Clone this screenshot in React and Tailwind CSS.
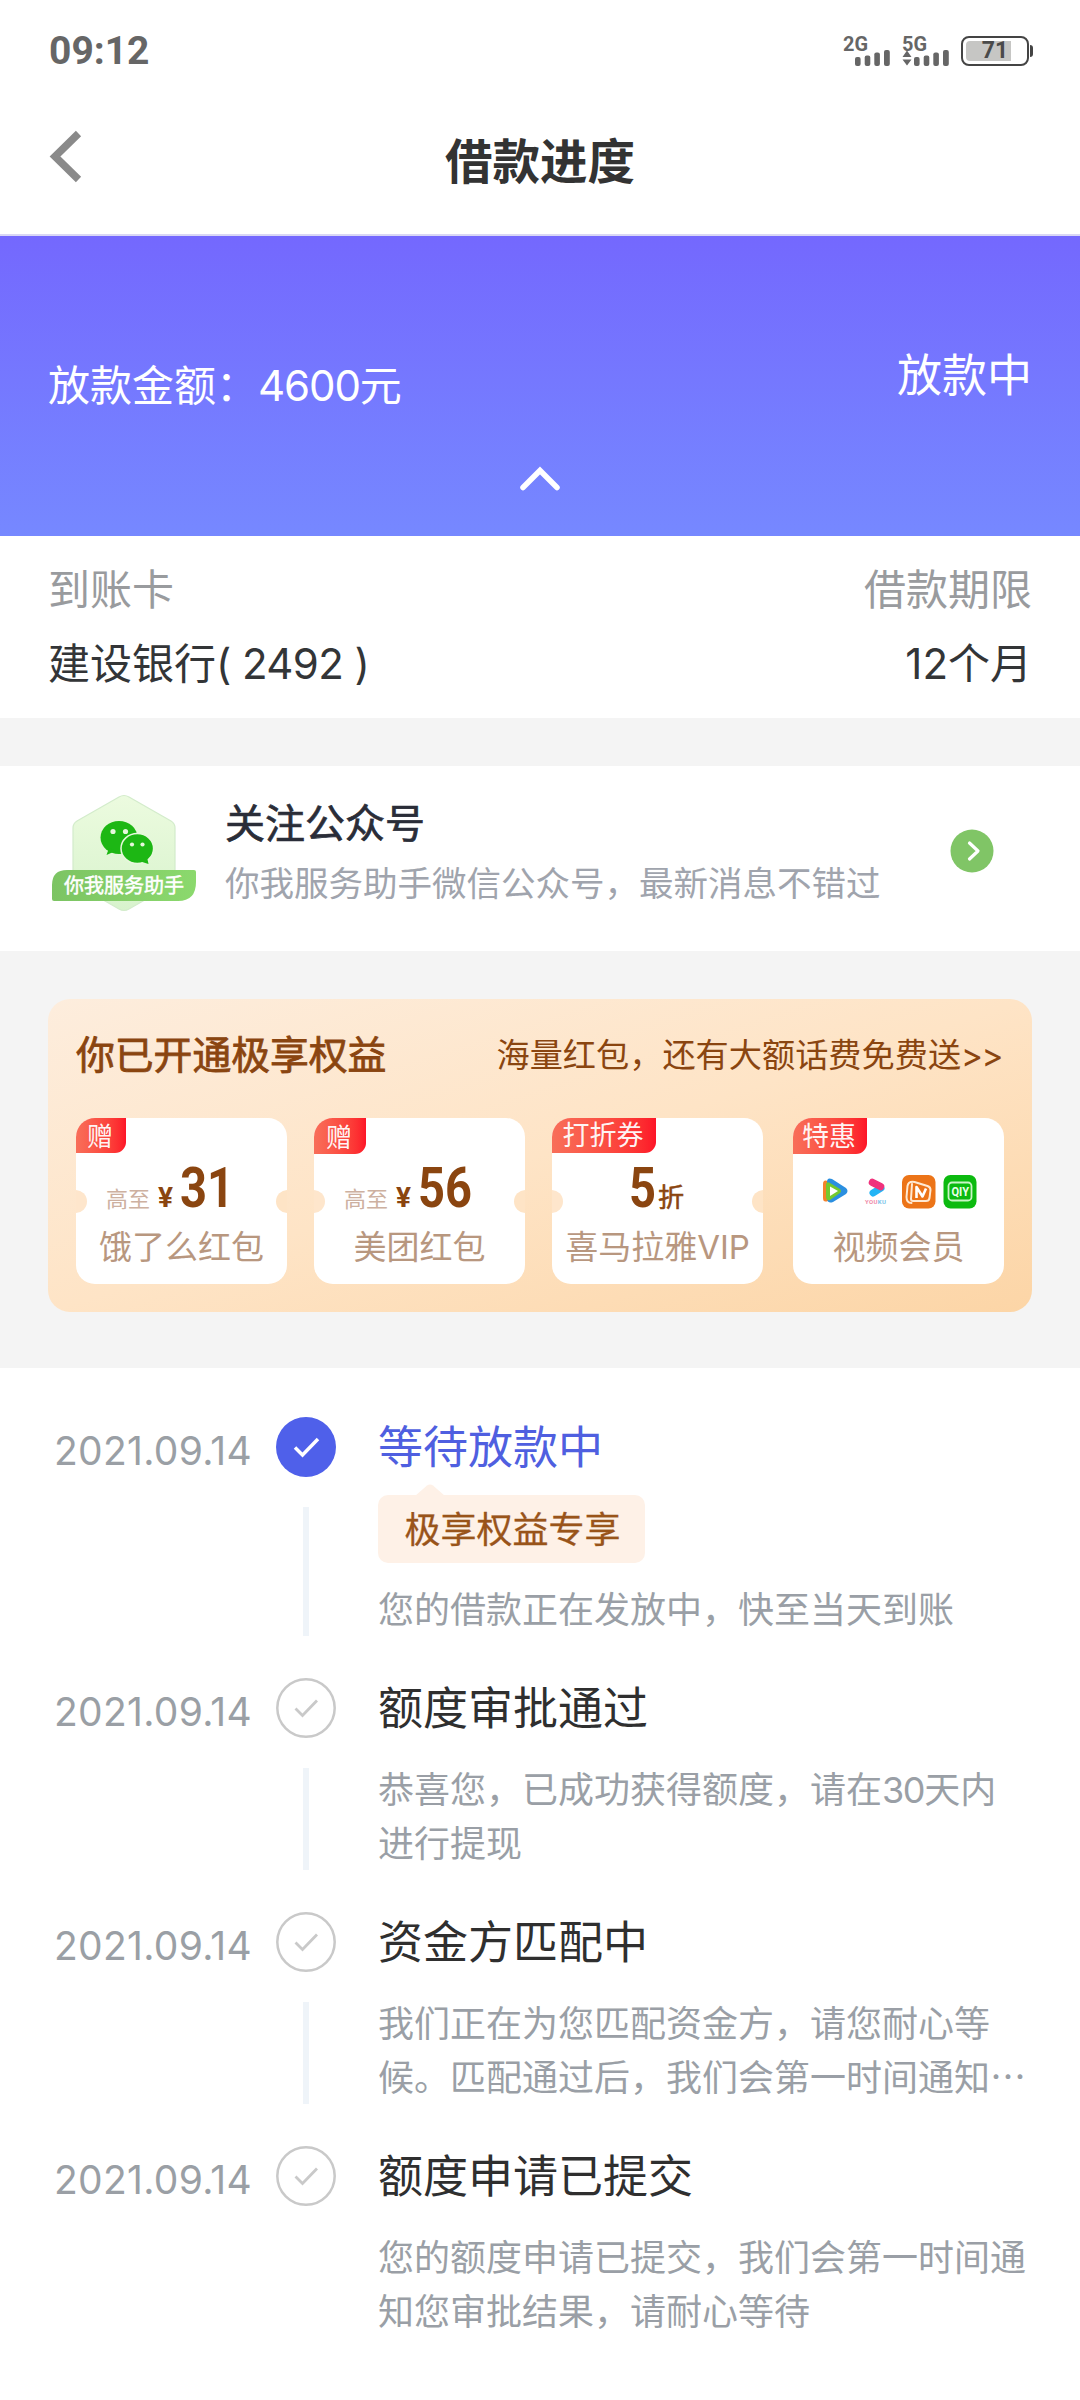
const coupons = [
  { tag: '赠', tagClass: 'w-[50px] h-[35px] text-[26px]', prefix: '高至', amount: '31', label: '饿了么红包', margin: '' },
  { tag: '赠', tagClass: 'w-[52px] h-[36px] text-[26px]', prefix: '高至', amount: '56', label: '美团红包', margin: 'ml-[27px]' },
  { tag: '打折券', tagClass: 'w-[104px] h-[35px] text-[27px]', discount: '5', label: '喜马拉雅VIP', margin: 'ml-[27px]' },
  { tag: '特惠', tagClass: 'w-[74px] h-[36px] text-[27px]', video: true, label: '视频会员', margin: 'ml-[30px]' },
];

const steps = [
  {
    date: '2021.09.14',
    title: '等待放款中',
    active: true,
    badge: '极享权益专享',
    lines: ['您的借款正在发放中，快至当天到账'],
  },
  {
    date: '2021.09.14',
    title: '额度审批通过',
    lines: [
      <>恭喜您，已成功获得额度，请在<span className="tracking-[-1.4px]">30</span>天内</>,
      '进行提现',
    ],
  },
  {
    date: '2021.09.14',
    title: '资金方匹配中',
    lines: ['我们正在为您匹配资金方，请您耐心等', '候。匹配通过后，我们会第一时间通知⋯'],
  },
  {
    date: '2021.09.14',
    title: '额度申请已提交',
    lines: ['您的额度申请已提交，我们会第一时间通', '知您审批结果，请耐心等待'],
  },
];

const SignalIcon = ({ label, arrows }) => (
  <svg width="50" height="44" viewBox="0 -6 50 44" fill="#666666">
    <text x="0" y="16" fontSize="21" fontWeight="700" fontFamily="Roboto, sans-serif" textLength="25" lengthAdjust="spacingAndGlyphs">{label}</text>
    {arrows && <path d="M5 15.500l4.500 6.500h-9zM5 30.500l-4.500-6h9z" />}
    <rect x="12" y="22" width="5.600" height="9" rx="2" />
    <rect x="21.700" y="20.500" width="5.600" height="10.500" rx="2" />
    <rect x="31.300" y="17.500" width="5.600" height="13.500" rx="2" />
    <rect x="41" y="15" width="5.800" height="16" rx="2" />
  </svg>
);

const StatusBar = () => (
  <div className="h-[102px] pl-[49px] pr-[47px] flex items-center justify-between">
    <span className="font-[Roboto] font-bold text-[39px] leading-[40px] text-[#666666]">09:12</span>
    <div className="flex items-center">
      <SignalIcon label="2G" />
      <div className="ml-[9px]">
        <SignalIcon label="5G" arrows />
      </div>
      <div className="ml-[9px] w-[68px] h-[30px] rounded-[8px] border-2 border-[#444444] p-[3px] relative">
        <div className="w-[45px] h-full rounded-l-[4px] bg-[#c6c6c4]"></div>
        <span className="absolute inset-0 flex items-center justify-center font-[Roboto] font-bold text-[23px] text-[#4a4a4a]">71</span>
      </div>
      <div className="ml-[1px] w-[3px] h-[12px] rounded-r-full bg-[#444444]"></div>
    </div>
  </div>
);

const NavBar = () => (
  <div className="h-[134px] border-b-2 border-[#d9d7f5] px-[48px] flex items-start">
    <svg className="mt-[28px]" width="36" height="54" viewBox="0 0 36 54" fill="none">
      <path d="M30.500 3.500L7 26.500l23.500 23" stroke="#8a8a8a" strokeWidth="7.500" />
    </svg>
    <h1 className="flex-1 mt-[30px] mr-[36px] text-center font-bold text-[47.5px] leading-[60px] text-[#333333]">借款进度</h1>
  </div>
);

const LoanHeader = () => (
  <div className="h-[300px] px-[48px] bg-linear-to-b from-[#7468fe] to-[#7688ff] text-white">
    <div className="h-[226px] pt-[110px] flex justify-between items-start">
      <div className="mt-[10px] text-[42px] leading-[60px]">
        放款金额：<span className="tracking-[-1.1px]">4600</span>元
      </div>
      <div className="text-[45px] leading-[60px]">放款中</div>
    </div>
    <svg className="mx-auto" width="44" height="32" viewBox="0 0 44 32" fill="none">
      <path d="M5 25.500L22 8.500l17 17" stroke="#ffffff" strokeWidth="5.500" strokeLinecap="round" />
    </svg>
  </div>
);

const LoanInfo = () => (
  <div className="h-[182px] px-[48px] pt-[24px] bg-white text-[42px] leading-[60px]">
    <div className="flex justify-between text-[#999b9e]">
      <span>到账卡</span>
      <span>借款期限</span>
    </div>
    <div className="mt-[14px] flex justify-between text-[#333537]">
      <span>建设银行<span className="tracking-[-0.6px]">( 2492 )</span></span>
      <span>12个月</span>
    </div>
  </div>
);

const AssistantIcon = () => (
  <svg width="146" height="120" viewBox="0 0 146 120">
    <defs>
      <linearGradient id="hex" x1="0" y1="0" x2="0" y2="1">
        <stop offset="0" stopColor="#ecfbdf" />
        <stop offset="1" stopColor="#d8f3cd" />
      </linearGradient>
      <linearGradient id="ribbon" x1="0" y1="0" x2="1" y2="0">
        <stop offset="0" stopColor="#7cc463" />
        <stop offset="1" stopColor="#8bd96d" />
      </linearGradient>
    </defs>
    <path d="M67 3q5-3 10 0l42 24q4 2.500 4 7v50q0 5-4 7l-42 24q-5 3-10 0l-42-24q-4-2-4-7v-50q0-4.500 4-7z" fill="url(#hex)" stroke="#d3eccb" strokeWidth="1.200" />
    <ellipse cx="67" cy="43.500" rx="18.500" ry="16.500" fill="#1db714" />
    <path d="M57 54l-2.500 7 9-4z" fill="#1db714" />
    <ellipse cx="85.300" cy="54.500" rx="16.300" ry="15" fill="#1db714" stroke="#e7f8dc" strokeWidth="1.500" />
    <path d="M87 67l9.500 3-1.500-7z" fill="#1db714" />
    <circle cx="61" cy="37.500" r="2.600" fill="#e7f8dc" />
    <circle cx="73.500" cy="37.500" r="2.600" fill="#e7f8dc" />
    <circle cx="80" cy="50.500" r="2.100" fill="#e7f8dc" />
    <circle cx="90.500" cy="50.500" r="2.100" fill="#e7f8dc" />
    <path d="M15 76H142q2 0 2 2v10q0 19-18 19H2q-2 0-2-2V91Q0 76 15 76z" fill="url(#ribbon)" />
    <text x="72" y="99" textAnchor="middle" fontSize="20" fill="#ffffff" stroke="#ffffff" strokeWidth="0.500" fontFamily="'Noto Sans CJK SC', sans-serif">你我服务助手</text>
  </svg>
);

const FollowCard = () => (
  <div className="h-[185px] pl-[52px] pr-[86px] bg-white flex items-start">
    <div className="mt-[28px]">
      <AssistantIcon />
    </div>
    <div className="ml-[27px] flex-1 whitespace-nowrap">
      <div className="mt-[33px] text-[40px] leading-[50px] text-[#2a2d38] [-webkit-text-stroke:0.7px_#2a2d38]">关注公众号</div>
      <div className="mt-[10px] text-[34.5px] leading-[50px] text-[#a0a4ad]">你我服务助手微信公众号，最新消息不错过</div>
    </div>
    <svg className="mt-[63px]" width="44" height="44" viewBox="0 0 44 44" fill="none">
      <circle cx="22" cy="22" r="21.500" fill="#80c566" />
      <path d="M19.500 14l8.500 8-8.500 8" stroke="#ffffff" strokeWidth="3.200" strokeLinecap="round" strokeLinejoin="round" />
    </svg>
  </div>
);

const VideoLogos = () => (
  <svg className="mx-auto" width="158" height="36" viewBox="0 0 158 36">
    {/* Tencent Video */}
    <path d="M8 8q-5-2-5 3v14q0 5 5 3z" fill="#f5822a" />
    <path d="M7 9q0-5 5-3l14 9q3 3 0 6l-13 8q-5 2-6-3z" fill="#2b8fe0" />
    <path d="M6 11q1-3 4-1l10 6q2 2 0 4l-10 7q-3 1-4-2z" fill="#74c92e" />
    <path d="M10 13.500l8 4.500-8 5z" fill="#ffffff" />
    {/* Youku */}
    <path d="M53 20l8-5" stroke="#22b4f5" strokeWidth="7" strokeLinecap="round" />
    <path d="M52.500 9.500l8 4" stroke="#f0327c" strokeWidth="7.500" strokeLinecap="round" />
    <text x="45" y="30.500" fontSize="6" fontWeight="700" fontFamily="Roboto, sans-serif" textLength="21" fill="#f08aa8">YOU<tspan fill="#7cc4ea">KU</tspan></text>
    {/* Mango TV */}
    <rect x="82" y="2" width="33.500" height="33.500" rx="7" fill="#ec7418" />
    <path d="M92 11l-1 15q0 2 2 2h13q3 0 3.500-3l1-8q0-3-3-4l-13-4q-6-1-7 4l-1 11q0 6 5 6" fill="none" stroke="#ffe9d2" strokeWidth="2" strokeLinecap="round" strokeLinejoin="round" />
    <path d="M96.500 25V14l6 9.500 3.500-8" fill="none" stroke="#ffffff" strokeWidth="2.600" strokeLinejoin="round" />
    {/* iQIYI */}
    <rect x="123.500" y="2" width="33" height="33.500" rx="7" fill="#0cba10" />
    <rect x="128.500" y="9.500" width="23" height="18" rx="3.500" fill="none" stroke="#c9f5c6" strokeWidth="1.800" />
    <text x="131.500" y="23" fontSize="12" fontWeight="700" fontFamily="Roboto, sans-serif" textLength="17.500" lengthAdjust="spacingAndGlyphs" fill="#eaffea">QIY</text>
  </svg>
);

const Coupon = ({ tag, tagClass, prefix, amount, discount, video, label, margin }) => (
  <div className={`relative w-[211px] h-[166px] rounded-[19px] bg-white overflow-hidden shrink-0 ${margin}`}>
    <div className={`absolute left-0 top-0 flex items-center justify-center rounded-br-[11px] bg-linear-to-r from-[#f86e59] to-[#fd1428] text-white/95 ${tagClass}`}>
      <span className="relative -left-px top-px">{tag}</span>
    </div>
    {!video && (
      <>
        <div className="absolute -left-[12px] top-[72px] size-[23px] rounded-full bg-[#fee6cc]"></div>
        <div className="absolute -right-[12px] top-[72px] size-[23px] rounded-full bg-[#fee4c6]"></div>
      </>
    )}
    <div className="h-[96px] pt-[40px] text-[#8a4510]">
      {amount && (
        <div className="pl-[30px] flex items-baseline leading-[60px]">
          <span className="w-[45px] text-[22px] whitespace-nowrap text-[#cdb0a0]">{prefix}</span>
          <span className="ml-[7px] w-[22px] font-[Roboto] font-bold text-[28px]">¥</span>
          <span className="inline-block origin-left scale-x-[0.84] font-[Roboto] font-bold text-[56px]">{amount}</span>
        </div>
      )}
      {discount && (
        <div className="pl-[77px] flex items-baseline leading-[60px]">
          <span className="inline-block w-[29px] origin-left scale-x-[0.84] font-[Roboto] font-bold text-[56px]">{discount}</span>
          <span className="text-[26px] [-webkit-text-stroke:0.6px_#8a4510]">折</span>
        </div>
      )}
      {video && (
        <div className="pt-[15px]">
          <VideoLogos />
        </div>
      )}
    </div>
    <div className="h-[66px] text-center whitespace-nowrap text-[33px] leading-[66px] text-[#b8977f]">{label}</div>
  </div>
);

const BenefitsCard = () => (
  <div className="h-[313px] rounded-[22px] px-[28px] pt-[31px] bg-linear-to-br from-[#fdeddd] via-[#fee4c6] to-[#fcd5a6]">
    <div className="flex items-center justify-between whitespace-nowrap leading-[50px] text-[#8a4510]">
      <span className="text-[38.8px] [-webkit-text-stroke:0.8px_#8a4510]">你已开通极享权益</span>
      <span className="mr-[2px] text-[33.2px]">海量红包，还有大额话费免费送<span className="tracking-[-1.5px]">&gt;&gt;</span></span>
    </div>
    <div className="mt-[38px] flex">
      {coupons.map((c, i) => (
        <Coupon key={i} {...c} />
      ))}
    </div>
  </div>
);

const Step = ({ date, title, active, badge, lines, last }) => (
  <div className="flex">
    <div className="w-[222px] pt-[4px] text-[39px] leading-[60px] tracking-[0.3px] text-[#9a9fa5]">{date}</div>
    <div className="w-[60px] flex flex-col items-center">
      {active ? (
        <svg width="60" height="60" viewBox="0 0 60 60" fill="none">
          <circle cx="30" cy="30" r="30" fill="#4f60ea" />
          <path d="M19 30.500l7.500 7.500L42 22" stroke="#ffffff" strokeWidth="3.500" />
        </svg>
      ) : (
        <svg width="60" height="60" viewBox="0 0 60 60" fill="none">
          <circle cx="30" cy="30" r="28.700" stroke="#c9c9c9" strokeWidth="2.500" />
          <path d="M19.500 30.500l7 7L41 22.500" stroke="#c9c9c9" strokeWidth="2.800" />
        </svg>
      )}
      {!last && <div className="mt-[30px] mb-[42px] w-[6px] flex-1 bg-[#eff4f9]"></div>}
    </div>
    <div className="ml-[42px] pb-[41px] whitespace-nowrap">
      <div className={active ? 'pt-px text-[45px] leading-[60px] text-[#4f5fe0]' : 'pt-px text-[45px] leading-[60px] text-[#2f2f2f]'}>{title}</div>
      {badge && (
        <div className="relative mt-[17px] -mb-[4px] w-[267px] h-[68px] rounded-[10px] bg-[#fef1e7] flex items-center justify-center text-[36px] leading-[68px] text-[#99541a] [-webkit-text-stroke:0.3px_#99541a]">
          <svg className="absolute left-[37px] -top-[11px]" width="30" height="12" viewBox="0 0 30 12">
            <path d="M0 12L12 1.500q3-2 6 0L30 12z" fill="#fef1e7" />
          </svg>
          <span className="relative left-px top-px">{badge}</span>
        </div>
      )}
      <div className="mt-[24px] text-[36px] leading-[54px] text-[#9a9fa6]">
        {lines.map((line, i) => (
          <div key={i}>{line}</div>
        ))}
      </div>
    </div>
  </div>
);

export default function App() {
  return (
    <div className="w-[1080px] h-[2400px] overflow-hidden bg-[#f4f4f4] font-[Inter,'Noto_Sans_CJK_SC',sans-serif]">
      <div className="bg-white">
        <StatusBar />
        <NavBar />
      </div>
      <LoanHeader />
      <LoanInfo />
      <div className="h-[48px]"></div>
      <FollowCard />
      <div className="px-[48px] pt-[48px] pb-[56px]">
        <BenefitsCard />
      </div>
      <div className="h-[1032px] pt-[49px] pl-[54px] bg-white">
        {steps.map((step, i) => (
          <Step key={step.title} {...step} last={i === steps.length - 1} />
        ))}
      </div>
    </div>
  );
}
